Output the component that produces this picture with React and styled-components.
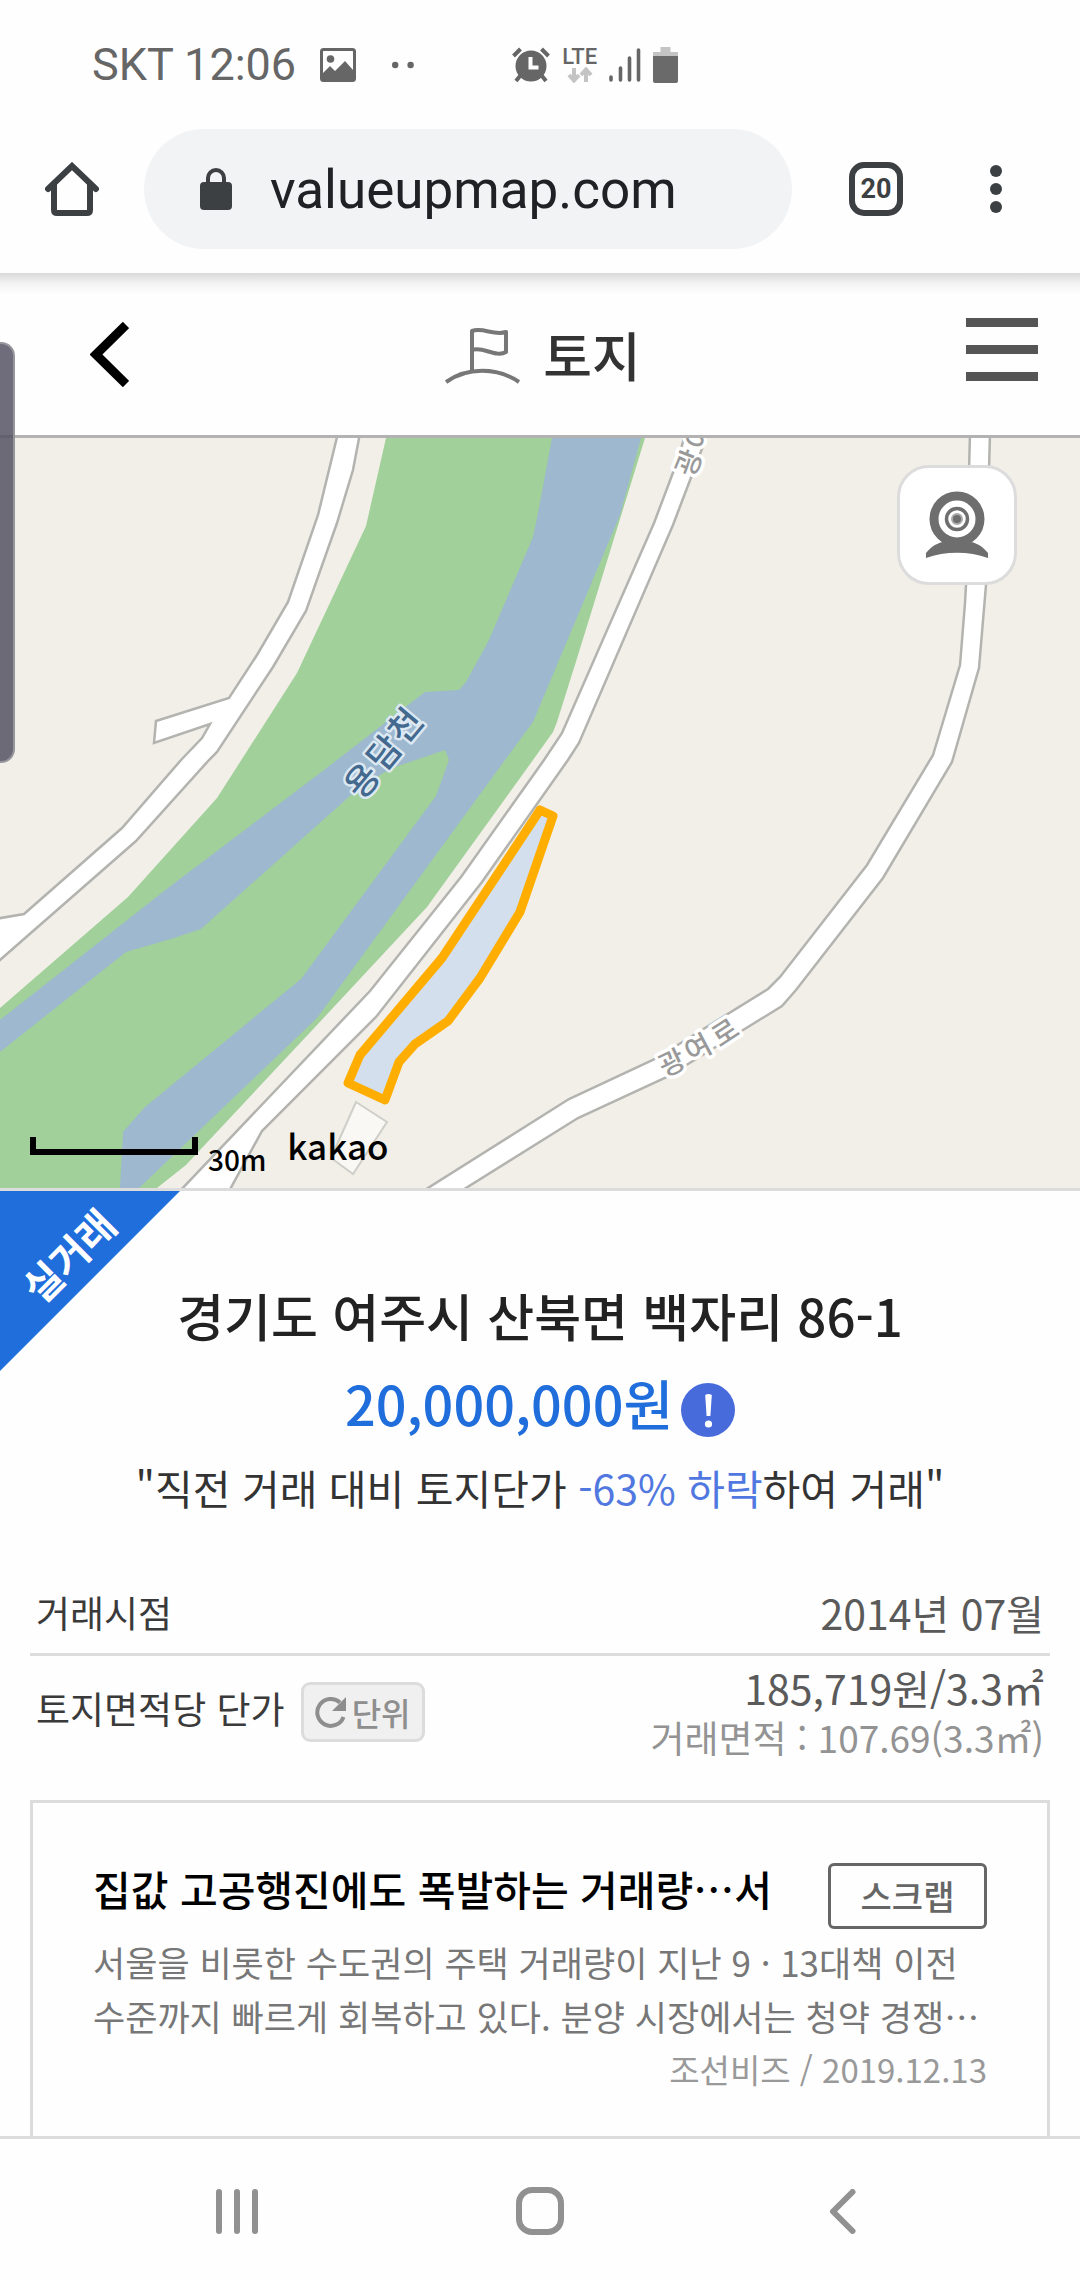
import React, { useState } from 'react';
import styled, { createGlobalStyle, css } from 'styled-components';

const GlobalStyle = createGlobalStyle`
    * {
        box-sizing: border-box;
    }
    body {
        margin: 0;
        background: #FEFEFE;
        font-family: "Noto Sans CJK KR", "Noto Sans", sans-serif;
    }
    button {
        margin: 0;
        padding: 0;
        border: 0;
        background: none;
        font-family: inherit;
        cursor: pointer;
    }
    svg {
        display: block;
    }
`
const Page = styled.div`
    position: relative;
    display: flex;
    flex-direction: column;
    height: 100vh;
    overflow: hidden;
`
const IconButton = styled.button`
    display: flex;
    align-items: center;
    justify-content: center;
    flex: none;
`

/* phone status bar */
const StatusBar = styled.header`
    display: flex;
    align-items: center;
    flex: none;
    height: 105px;
    padding: 24px 92px 0;

    font-family: Roboto, sans-serif;
    font-size: 45px;
    line-height: 48px;
    color: #666666;
`
const StatusIcons = styled.div`
    display: flex;
    align-items: center;
    gap: ${props => props.$gap}px;
    margin-left: ${props => props.$space}px;
`
const Network = styled.div`
    display: flex;
    flex-direction: column;
    align-items: center;
    font-size: 22px;
    font-weight: 500;
    line-height: 20px;
`

/* browser bar */
const BrowserBar = styled.div`
    position: relative;
    z-index: 2;
    display: flex;
    align-items: center;
    flex: none;
    height: 168px;
    padding: 0 57px 0 45px;
    background: #FEFEFE;

    &::after {
        content: "";
        position: absolute;
        top: 100%;
        left: 0;
        right: 0;
        height: 21px;
        background: linear-gradient(rgba(0, 0, 0, 0.15), rgba(0, 0, 0, 0.05) 45%, transparent);
    }
`
const Address = styled.div`
    display: flex;
    align-items: center;
    flex: 1;
    min-width: 0;
    height: 120px;
    margin: 0 57px 0 45px;
    padding: 0 54px 0 56px;
    gap: 38px;
    border-radius: 60px;
    background: #F1F3F5;
`
const Url = styled.input`
    flex: 1;
    min-width: 0;
    padding: 2px 0 0;
    border: 0;
    outline: 0;
    background: none;

    font-family: Roboto, sans-serif;
    font-size: 53px;
    line-height: 72px;
    color: #202124;
`
const TabCount = styled.button`
    flex: none;
    width: 54px;
    height: 54px;
    margin-right: 66px;
    border: 6px solid #3C4043;
    border-radius: 15px;

    font-family: Roboto, sans-serif;
    font-size: 27px;
    font-weight: bold;
    line-height: 42px;
    color: #3C4043;
`

/* site header */
const SiteHeader = styled.header`
    display: grid;
    grid-template-columns: 1fr auto 1fr;
    align-items: center;
    flex: none;
    height: 165px;
    padding: 0 42px 0 48px;
    border-bottom: 3px solid #B2B2B2;
`
const BackButton = styled(IconButton)`
    justify-self: start;
    padding-left: 42px;
`
const MenuButton = styled(IconButton)`
    justify-self: end;
`
const PageName = styled.h1`
    display: flex;
    align-items: center;
    gap: 22px;
    margin: 0;

    font-size: 53px;
    font-weight: 500;
    line-height: 72px;
    color: #333333;
`

/* map */
const MapArea = styled.section`
    position: relative;
    flex: none;
    height: 753px;
    border-bottom: 3px solid #DCDCDC;
    background: #F2EFE8;
    overflow: hidden;
`
const MapDrawing = styled.svg`
    width: 100%;
    height: 100%;
`
const StreetViewButton = styled(IconButton)`
    position: absolute;
    top: 27px;
    right: 63px;
    width: 120px;
    height: 120px;
    border: 3px solid #DCDCDC;
    border-radius: 32px;
    background: #FFFFFF;
`
const MapLegend = styled.div`
    position: absolute;
    left: 30px;
    bottom: 8px;
    display: flex;
    align-items: flex-end;
    gap: 10px;
    color: #000000;
`
const ScaleLine = styled.div`
    width: 168px;
    height: 18px;
    margin-bottom: 25px;
    border: 6px solid #000000;
    border-top: 0;
`
const ScaleText = styled.span`
    font-size: 28px;
    font-weight: 500;
    line-height: 42px;
`
const MapBrand = styled.span`
    margin: 0 0 11px 11px;
    font-size: 35px;
    font-weight: 500;
    line-height: 48px;
`
const EdgeHandle = styled.div`
    position: absolute;
    z-index: 3;
    left: 0;
    top: 342px;
    width: 15px;
    height: 421px;
    border: 2px solid rgba(160, 160, 165, 0.8);
    border-left: 0;
    border-radius: 0 14px 14px 0;
    background: rgba(84, 80, 98, 0.84);
`

/* deal summary */
const Deal = styled.section`
    position: relative;
    display: flex;
    flex-direction: column;
    align-items: center;
    flex: none;
    padding: 80px 30px 44px;
    text-align: center;
    white-space: nowrap;
`
const Ribbon = styled.svg`
    position: absolute;
    left: 0;
    top: 0;
    width: 180px;
    height: 180px;
`
const Place = styled.h2`
    margin: 0;
    font-size: 51px;
    font-weight: 500;
    line-height: 88px;
    color: #222222;
`
const Price = styled.div`
    display: flex;
    align-items: center;
    gap: 8px;

    font-size: 54px;
    font-weight: 500;
    line-height: 88px;
    color: #206DDC;

    svg {
        margin-top: 14px;
    }
`
const Comment = styled.p`
    margin: 0;
    font-size: 41px;
    line-height: 80px;
    color: #333333;
`
const Drop = styled.span`
    color: #5078E0;
`

/* detail rows */
const Rows = styled.dl`
    flex: none;
    margin: 0 30px 32px;
`
const Row = styled.div`
    display: flex;
    align-items: center;
    justify-content: space-between;
    min-height: 85px;
    padding: 6px;

    ${props =>
        props.$line && css`
            border-bottom: 3px solid #DCDCDC;
            `}
`
const Label = styled.dt`
    display: flex;
    align-items: flex-start;
    gap: 16px;

    font-size: 37px;
    line-height: 52px;
    color: #3A3A3A;
`
const Values = styled.dd`
    margin: 0;
    text-align: right;
`
const Value = styled.div`
    font-size: ${props => props.$sub ? 37 : 41}px;
    line-height: 50px;
    color: ${props => props.$sub ? '#939393' : '#5A5A5A'};
`
const UnitButton = styled(IconButton)`
    height: 60px;
    padding: 0 11px;
    gap: 5px;
    border: 3px solid #DCDCDC;
    border-radius: 9px;
    background: #F0F0F0;

    font-size: 32px;
    font-weight: 500;
    line-height: 48px;
    color: #8E8E8E;
`

/* news card */
const News = styled.article`
    flex: 1;
    min-height: 0;
    margin: 0 30px;
    padding: 60px;
    border: 3px solid #DCDCDC;
    border-bottom: 0;
    overflow: hidden;
`
const NewsHead = styled.div`
    display: flex;
    align-items: flex-start;
    justify-content: space-between;
    gap: 40px;
`
const NewsTitle = styled.h3`
    flex: 1;
    min-width: 0;
    margin: 0;
    white-space: nowrap;

    font-size: 41px;
    font-weight: 500;
    line-height: 50px;
    color: #000000;
`
const ScrapButton = styled.button`
    flex: none;
    width: 159px;
    height: 66px;
    border: 3px solid #666666;
    border-radius: 6px;

    font-size: 34px;
    font-weight: 500;
    line-height: 50px;
    color: #666666;
`
const NewsText = styled.p`
    margin: 6px 0 0;
    white-space: pre;

    font-size: 35px;
    line-height: 54px;
    color: #777777;
`
const NewsSource = styled.div`
    font-size: 33px;
    line-height: 52px;
    text-align: right;
    color: #999999;
`

/* android buttons */
const NavBar = styled.nav`
    display: grid;
    grid-template-columns: repeat(3, 1fr);
    justify-items: center;
    align-items: center;
    flex: none;
    height: 144px;
    padding: 3px 86px 0;
    border-top: 3px solid #DCDCDC;
    background: #FEFEFE;
`

const PictureIcon = () => (
    <svg width="36" height="34" viewBox="0 0 36 34" fill="none">
        <rect x="1.5" y="1.5" width="33" height="31" rx="2" stroke="#666" strokeWidth="3" />
        <circle cx="10.5" cy="11" r="3.8" fill="#666" />
        <path d="M3 25l7-7 5 5 10-10 8 9v9H3z" fill="#666" />
    </svg>
)
const MoreDots = () => (
    <svg width="22" height="8" viewBox="0 0 22 8" fill="#666">
        <circle cx="3.2" cy="4" r="3.2" />
        <circle cx="18.6" cy="4" r="3.2" />
    </svg>
)
const AlarmIcon = () => (
    <svg width="38" height="36" viewBox="0 0 38 36" fill="none">
        <circle cx="19" cy="19" r="15.5" fill="#666" />
        <path d="M1.5 9l7-7M36.5 9l-7-7" stroke="#666" strokeWidth="4" />
        <path d="M8 29l-4 5M30 29l4 5" stroke="#666" strokeWidth="4" />
        <path d="M18.5 10v10.500h8" stroke="#fff" strokeWidth="4" />
    </svg>
)
const DataArrows = () => (
    <svg width="26" height="16" viewBox="0 0 26 16" fill="none" stroke="#C4C4C4" strokeWidth="4">
        <path d="M7 1v12M2 8l5 5.500 5-5.500" />
        <path d="M19 15V3M14 8l5-5.500 5 5.500" />
    </svg>
)
const SignalIcon = () => (
    <svg width="32" height="36" viewBox="0 0 32 36" stroke="#666" strokeWidth="3.600" strokeLinecap="round">
        <path d="M2 30v3M11.500 21v12M20.500 11v22M29.500 3v30" />
    </svg>
)
const BatteryIcon = () => (
    <svg width="25" height="36" viewBox="0 0 25 36">
        <path d="M7.500 0h10v5H25v5H0V5h7.500z" fill="#C4C4C4" />
        <path d="M0 9h25v25q0 2-2 2H2q-2 0-2-2z" fill="#6A6A6A" />
    </svg>
)
const HomeIcon = () => (
    <svg width="54" height="54" viewBox="0 0 54 54" fill="none" stroke="#3C4043" strokeWidth="6" strokeLinecap="round" strokeLinejoin="round">
        <path d="M3 27L27 4l24 23" strokeLinejoin="miter" />
        <path d="M9 23v25q0 3 3 3h30q3 0 3-3V23" />
    </svg>
)
const LockIcon = () => (
    <svg width="32" height="42" viewBox="0 0 32 42" fill="none">
        <path d="M8 16V10a8 8 0 0 1 16 0v6" stroke="#3C4043" strokeWidth="4" />
        <rect y="14" width="32" height="28" rx="4" fill="#3C4043" />
    </svg>
)
const KebabIcon = () => (
    <svg width="54" height="54" viewBox="0 0 54 54" fill="#3C4043">
        <circle cx="27" cy="9" r="6" />
        <circle cx="27" cy="27" r="6" />
        <circle cx="27" cy="45" r="6" />
    </svg>
)
const BackIcon = () => (
    <svg width="39" height="65" viewBox="0 0 39 65" fill="none" stroke="#000" strokeWidth="9">
        <path d="M36 3L6 32.500 36 62" />
    </svg>
)
const FlagIcon = () => (
    <svg width="76" height="60" viewBox="0 0 76 60" fill="none" stroke="#777" strokeWidth="4" strokeLinejoin="round">
        <path d="M27 48V7c11-4 22 5 34 1v20c-10 6-23-6-34-2" />
        <path d="M1 58C22 43 52 43 74 58" />
    </svg>
)
const HamburgerIcon = () => (
    <svg width="72" height="72" viewBox="0 0 72 72" fill="#555">
        <rect width="72" height="9" />
        <rect y="27" width="72" height="9" />
        <rect y="54" width="72" height="9" />
    </svg>
)
const WebcamIcon = () => (
    <svg width="62" height="68" viewBox="0 0 62 68" fill="none">
        <path d="M0 62c8-10 16-11 22-12h18c6 1 14 2 22 12v5c-19-7-43-7-62 0z" fill="#6E6E6E" />
        <circle cx="31" cy="28" r="23" fill="#fff" stroke="#6E6E6E" strokeWidth="9" />
        <circle cx="31" cy="28" r="10.500" stroke="#6E6E6E" strokeWidth="3.500" />
        <circle cx="31" cy="28" r="5" fill="#6E6E6E" stroke="#AAA" strokeWidth="2" />
    </svg>
)
const InfoIcon = () => (
    <svg width="54" height="54" viewBox="0 0 54 54">
        <circle cx="27" cy="27" r="27" fill="#486BDC" />
        <path d="M24.200 12q3.300-2 6.600 0l-1.400 21h-3.800z" fill="#fff" />
        <circle cx="27.500" cy="41" r="3.600" fill="#fff" />
    </svg>
)
const ReloadIcon = () => (
    <svg width="32" height="32" viewBox="0 0 32 32" fill="none">
        <path d="M28.500 21A13.500 13.500 0 1 1 25 6.500" stroke="#8E8E8E" strokeWidth="4" />
        <path d="M31 1v14H17z" fill="#8E8E8E" />
    </svg>
)
const RecentsIcon = () => (
    <svg width="42" height="45" viewBox="0 0 42 45" stroke="#919191" strokeWidth="6" strokeLinecap="round">
        <path d="M3 3v39M21 3v39M39 3v39" />
    </svg>
)
const NavHomeIcon = () => (
    <svg width="48" height="48" viewBox="0 0 48 48" fill="none" stroke="#919191" strokeWidth="6">
        <rect x="3" y="3" width="42" height="42" rx="13" />
    </svg>
)
const NavBackIcon = () => (
    <svg width="27" height="45" viewBox="0 0 27 45" fill="none" stroke="#919191" strokeWidth="6" strokeLinecap="round" strokeLinejoin="round">
        <path d="M23.500 3L4 22.500 23.500 42" />
    </svg>
)

const roads = [
    "M338-5L318 77 288 164 257 217 229 260 156 283 154 305 210 286 202 300 181 322 122 390 24 476-5 481V527L0 522 136 403 209 322 217 314 273 229 306 173 337 85 353 32 360-5z",
    "M686-5L674 32 654 85 562 295 544 322 461 439 370 553 178 755H228L262 693 376 579 482 444 568 322 579 305 673 87 692 37 708-5z",
    "M970-5L966 147 965 165 960 227 933 317 867 427 780 539 768 551 655 621 569 661 420 755H458L578 680 667 639 782 568 796 552 883 440 952 324 979 230 986 147 990-5z",
]
const roadLabels = [
    { text: "광", x: 671, y: 623, angle: -25 },
    { text: "여", x: 697, y: 608, angle: -28 },
    { text: "로", x: 724, y: 593, angle: -33 },
    { text: "광", x: 687, y: 24, angle: -68 },
    { text: "여", x: 697, y: -3, angle: -68 },
]
const riverLabels = [
    { text: "용", x: 360, y: 341, angle: -50 },
    { text: "담", x: 382, y: 313, angle: -50 },
    { text: "천", x: 403, y: 286, angle: -50 },
]

const MapLetter = ({ text, x, y, angle, ...rest }) => (
    <text
        transform={`translate(${x} ${y}) rotate(${angle})`}
        textAnchor="middle"
        dominantBaseline="central"
        paintOrder="stroke"
        strokeLinejoin="round"
        fontWeight="500"
        {...rest}
    >
        {text}
    </text>
)

const ParcelMap = () => (
    <MapDrawing viewBox="0 0 1080 750" preserveAspectRatio="xMidYMid slice">
        <path fill="#A1D09A" d="M386 0L366 88 297 235 217 360 128 459 0 570V750H157L186 727 317 587 427 469 533 322 553 294 557 284 579 214 645 0z" />
        <path fill="#9DB8CF" d="M552 0L539 70 533 99 489 202 466 244 459 252 425 254 324 332 168 450 0 582V614L126 514 174 500 201 491 351 357 383 335 395 329 445 312 449 322 436 358 301 541 145 669 123 694 120 750H139L317 580 505 322 533 284 620 77 641 0z" />
        {roads.map((d, i) => (
            <path key={`road_${i}`} d={d} fill="#FFFFFF" stroke="#B3B3B0" strokeWidth="2.500" />
        ))}
        <path d="M356 664L387 684 353 736 331 720z" fill="#F9F8F4" stroke="#CFCFCA" strokeWidth="2" />
        <path d="M540 372L553 378 520 474 480 540 448 583 415 606 399 624 385 662 348 645 360 617 442 520z" fill="#D3DFEC" stroke="#FFAE00" strokeWidth="9" strokeLinejoin="round" />
        {roadLabels.map((label, i) => (
            <MapLetter key={`name_${i}`} {...label} fontSize="28" fill="#999999" stroke="#FFFFFF" strokeWidth="7" />
        ))}
        {riverLabels.map((label, i) => (
            <MapLetter key={`river_${i}`} {...label} fontSize="35" fill="#44698F" stroke="#DCE8F2" strokeWidth="5" />
        ))}
    </MapDrawing>
)

const App = () => {
    const [url, setUrl] = useState("valueupmap.com")

    return (
        <Page lang="ko">
            <GlobalStyle />
            <StatusBar>
                <span>SKT 12:06</span>
                <StatusIcons $space={24} $gap={36}>
                    <PictureIcon />
                    <MoreDots />
                </StatusIcons>
                <StatusIcons $space={98} $gap={12}>
                    <AlarmIcon />
                    <Network>
                        LTE
                        <DataArrows />
                    </Network>
                    <SignalIcon />
                    <BatteryIcon />
                </StatusIcons>
            </StatusBar>
            <BrowserBar>
                <IconButton aria-label="홈"><HomeIcon /></IconButton>
                <Address>
                    <LockIcon />
                    <Url aria-label="주소" value={url} onChange={(e) => setUrl(e.target.value)} />
                </Address>
                <TabCount>20</TabCount>
                <IconButton aria-label="더보기"><KebabIcon /></IconButton>
            </BrowserBar>

            <SiteHeader>
                <BackButton aria-label="뒤로"><BackIcon /></BackButton>
                <PageName><FlagIcon />토지</PageName>
                <MenuButton aria-label="메뉴"><HamburgerIcon /></MenuButton>
            </SiteHeader>

            <MapArea>
                <ParcelMap />
                <StreetViewButton aria-label="로드뷰"><WebcamIcon /></StreetViewButton>
                <MapLegend>
                    <ScaleLine />
                    <ScaleText>30m</ScaleText>
                    <MapBrand>kakao</MapBrand>
                </MapLegend>
            </MapArea>

            <Deal>
                <Ribbon viewBox="0 0 180 180">
                    <path d="M0 0H180L0 180z" fill="#206DDC" />
                    <text transform="translate(68 64) rotate(-45)" textAnchor="middle" dominantBaseline="central" fontSize="40" fontWeight="bold" fill="#FFFFFF">실거래</text>
                </Ribbon>
                <Place>경기도 여주시 산북면 백자리 86-1</Place>
                <Price>20,000,000원<InfoIcon /></Price>
                <Comment>"직전 거래 대비 토지단가 <Drop>-63% 하락</Drop>하여 거래"</Comment>
            </Deal>

            <Rows>
                <Row $line>
                    <Label>거래시점</Label>
                    <Values><Value>2014년 07월</Value></Values>
                </Row>
                <Row>
                    <Label>
                        토지면적당 단가
                        <UnitButton><ReloadIcon />단위</UnitButton>
                    </Label>
                    <Values>
                        <Value>185,719원/3.3㎡</Value>
                        <Value $sub>거래면적 : 107.69(3.3㎡)</Value>
                    </Values>
                </Row>
            </Rows>

            <News>
                <NewsHead>
                    <NewsTitle>집값 고공행진에도 폭발하는 거래량…서</NewsTitle>
                    <ScrapButton>스크랩</ScrapButton>
                </NewsHead>
                <NewsText>{"서울을 비롯한 수도권의 주택 거래량이 지난 9 · 13대책 이전\n수준까지 빠르게 회복하고 있다. 분양 시장에서는 청약 경쟁…"}</NewsText>
                <NewsSource>조선비즈 / 2019.12.13</NewsSource>
            </News>

            <NavBar>
                <IconButton aria-label="최근 앱"><RecentsIcon /></IconButton>
                <IconButton aria-label="홈 화면"><NavHomeIcon /></IconButton>
                <IconButton aria-label="이전"><NavBackIcon /></IconButton>
            </NavBar>
            <EdgeHandle />
        </Page>
    )
}

export default App
